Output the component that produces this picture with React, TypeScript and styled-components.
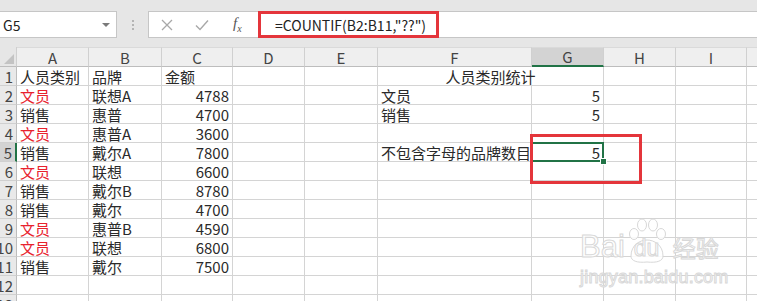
import React, { FunctionComponent } from 'react';
import styled, { createGlobalStyle } from 'styled-components';

const GlobalStyle = createGlobalStyle`
  html, body {
    margin: 0;
    padding: 0;
    background: #ffffff;
    overflow: hidden;
  }
  body {
    font-family: "Noto Sans CJK SC", "Noto Sans", sans-serif;
  }
`;

const GRID = '#d4d4d4';
const GREEN = '#217346';
const RED = '#e4353b';

const cols = ['A', 'B', 'C', 'D', 'E', 'F', 'G', 'H', 'I', ''];
const colWidths = [72, 73, 71, 72, 73, 154, 72, 72, 71, 80];

type Cell = { text: string; align?: 'left' | 'right' | 'center'; red?: boolean; span?: number };

const rows: Record<string, Cell>[] = [
  { A: { text: '人员类别' }, B: { text: '品牌' }, C: { text: '金额' }, F: { text: '人员类别统计', align: 'center', span: 2 } },
  { A: { text: '文员', red: true }, B: { text: '联想A' }, C: { text: '4788', align: 'right' }, F: { text: '文员' }, G: { text: '5', align: 'right' } },
  { A: { text: '销售' }, B: { text: '惠普' }, C: { text: '4700', align: 'right' }, F: { text: '销售' }, G: { text: '5', align: 'right' } },
  { A: { text: '文员', red: true }, B: { text: '惠普A' }, C: { text: '3600', align: 'right' } },
  { A: { text: '销售' }, B: { text: '戴尔A' }, C: { text: '7800', align: 'right' }, F: { text: '不包含字母的品牌数目' }, G: { text: '5', align: 'right' } },
  { A: { text: '文员', red: true }, B: { text: '联想' }, C: { text: '6600', align: 'right' } },
  { A: { text: '销售' }, B: { text: '戴尔B' }, C: { text: '8780', align: 'right' } },
  { A: { text: '销售' }, B: { text: '戴尔' }, C: { text: '4700', align: 'right' } },
  { A: { text: '文员', red: true }, B: { text: '惠普B' }, C: { text: '4590', align: 'right' } },
  { A: { text: '文员', red: true }, B: { text: '联想' }, C: { text: '6800', align: 'right' } },
  { A: { text: '销售' }, B: { text: '戴尔' }, C: { text: '7500', align: 'right' } },
  {},
  {},
];

const Page = styled.div`
  position: relative;
  width: 757px;
  height: 301px;
  overflow: hidden;
  background: #ffffff;
`;

const Toolbar = styled.div`
  display: flex;
  align-items: stretch;
  height: 27px;
  padding: 11px 0 9px;
  background: #e6e6e6;
  border-top: 1px solid #d6d6d6;
  box-sizing: content-box;
  margin-top: -1px;
`;

const NameBox = styled.div`
  display: flex;
  align-items: center;
  justify-content: space-between;
  width: 118px;
  margin-left: -1px;
  padding: 0 6px 0 3px;
  box-sizing: border-box;
  background: #ffffff;
  border: 1px solid #c6c6c6;
  font-size: 14px;
  color: #222;
`;

const DropArrow = styled.span`
  width: 0;
  height: 0;
  border-left: 4px solid transparent;
  border-right: 4px solid transparent;
  border-top: 4px solid #7a7a7a;
`;

const Grip = styled.div`
  width: 31px;
  display: flex;
  flex-direction: column;
  align-items: center;
  justify-content: center;
  gap: 2px;
  > span {
    width: 2px;
    height: 2px;
    background: #b4b4b4;
  }
`;

const FormulaArea = styled.div`
  flex: 1;
  display: flex;
  align-items: stretch;
  background: #ffffff;
  border: 1px solid #c6c6c6;
  border-right: none;
`;

const FxButtons = styled.div`
  display: flex;
  align-items: center;
  width: 109px;
  padding-left: 12px;
  box-sizing: border-box;
  gap: 22px;
`;

const FxGlyph = styled.span`
  font-family: "Liberation Serif", serif;
  font-style: italic;
  font-size: 15px;
  color: #555;
  margin-left: 2px;
`;

const FormulaText = styled.div`
  display: flex;
  align-items: center;
  width: 181px;
  margin: -1px 0;
  padding-left: 14px;
  box-sizing: border-box;
  border: 3px solid ${RED};
  font-size: 14px;
  color: #222;
  white-space: nowrap;
`;

const Sheet = styled.div`
  display: grid;
  grid-template-columns: 17px ${colWidths.map((w) => `${w}px`).join(' ')};
  grid-template-rows: 20px;
  grid-auto-rows: 19px;
`;

const Corner = styled.div`
  position: relative;
  background: #e6e6e6;
  border-right: 1px solid #cfcfcf;
  border-bottom: 1px solid #bdbdbd;
  &::after {
    content: '';
    position: absolute;
    right: 2px;
    bottom: 2px;
    border-left: 10px solid transparent;
    border-bottom: 10px solid #c3c3c3;
  }
`;

const ColHead = styled.div<{ $active?: boolean }>`
  display: flex;
  align-items: center;
  justify-content: center;
  background: ${({ $active }) => ($active ? '#d3d3d3' : '#efefef')};
  border-right: 1px solid #d0d0d0;
  border-bottom: ${({ $active }) => ($active ? `2px solid ${GREEN}` : '1px solid #bdbdbd')};
  border-top: 1px solid #dadada;
  box-sizing: border-box;
  font-size: 15px;
  color: #444;
`;

const RowHead = styled.div<{ $active?: boolean }>`
  display: flex;
  align-items: center;
  justify-content: flex-end;
  overflow: hidden;
  padding-right: 3px;
  background: ${({ $active }) => ($active ? '#d3d3d3' : '#e9e9e9')};
  border-right: ${({ $active }) => ($active ? `2px solid ${GREEN}` : '1px solid #bdbdbd')};
  border-bottom: 1px solid #d0d0d0;
  box-sizing: border-box;
  font-size: 15px;
  color: #444;
  white-space: nowrap;
`;

const DataCell = styled.div<{ $align: string; $red?: boolean; $span?: number; $selected?: boolean }>`
  position: relative;
  grid-column: span ${({ $span }) => $span || 1};
  display: flex;
  align-items: center;
  justify-content: ${({ $align }) =>
    $align === 'right' ? 'flex-end' : $align === 'center' ? 'center' : 'flex-start'};
  padding: 0 3px;
  border-right: 1px solid ${GRID};
  border-bottom: 1px solid ${GRID};
  box-sizing: border-box;
  font-size: 15px;
  line-height: 19px;
  color: ${({ $red }) => ($red ? '#e8222d' : '#2a2a2a')};
  white-space: nowrap;
  overflow: visible;
  ${({ $selected }) =>
    $selected &&
    `
    &::after {
      content: '';
      position: absolute;
      left: -1px;
      top: -1px;
      right: -1px;
      bottom: -1px;
      border: 2px solid ${GREEN};
      pointer-events: none;
    }
    &::before {
      content: '';
      position: absolute;
      right: -4px;
      bottom: -4px;
      width: 5px;
      height: 5px;
      background: ${GREEN};
      border: 1px solid #ffffff;
      z-index: 2;
    }
  `}
`;

const Annotation = styled.div`
  position: absolute;
  left: 530px;
  top: 134px;
  width: 112px;
  height: 50px;
  border: 3px solid ${RED};
  box-sizing: border-box;
  pointer-events: none;
`;

const Watermark = styled.div`
  position: absolute;
  left: 580px;
  top: 218px;
  display: flex;
  flex-direction: column;
  align-items: flex-start;
  color: rgba(255, 255, 255, 0.85);
  -webkit-text-stroke: 1px #d8d8d8;
  font-family: "Liberation Sans", sans-serif;
  pointer-events: none;
`;

const MarkLine = styled.div`
  display: flex;
  align-items: flex-end;
  height: 46px;
`;

const MarkWord = styled.span`
  font-size: 31px;
  line-height: 32px;
  margin-bottom: 1px;
`;

const PawBox = styled.div`
  position: relative;
  width: 40px;
  height: 46px;
  margin-left: 2px;
  > svg {
    position: absolute;
    left: 0;
    top: 0;
  }
  > span {
    position: absolute;
    left: 7px;
    bottom: 4px;
    font-size: 23px;
    line-height: 24px;
  }
`;

const MarkCn = styled.span`
  font-family: "Noto Sans CJK SC", sans-serif;
  font-size: 23px;
  line-height: 30px;
  margin-left: 6px;
  margin-bottom: 2px;
`;

const MarkUrl = styled.div`
  font-size: 18px;
  line-height: 18px;
  margin-top: 4px;
  letter-spacing: 0.2px;
`;

const Paw: FunctionComponent = () => (
  <svg width="40" height="46" viewBox="0 0 40 46">
    <g fill="rgba(255,255,255,0.85)" stroke="#d8d8d8" strokeWidth="1">
      <ellipse cx="7" cy="16" rx="4.5" ry="5.5" />
      <ellipse cx="15" cy="7" rx="4.5" ry="6" />
      <ellipse cx="26" cy="7" rx="4.5" ry="6" />
      <ellipse cx="34" cy="16" rx="4.5" ry="5.5" />
      <path d="M4 38 C4 27 13 22 20 22 C27 22 36 27 36 38 C36 43 30 45 20 44 C10 45 4 43 4 38 Z" />
    </g>
  </svg>
);

const CrossIcon: FunctionComponent = () => (
  <svg width="12" height="12" viewBox="0 0 12 12">
    <path d="M1 1 L11 11 M11 1 L1 11" stroke="#a8a8a8" strokeWidth="1.3" fill="none" />
  </svg>
);

const CheckIcon: FunctionComponent = () => (
  <svg width="14" height="12" viewBox="0 0 14 12">
    <path d="M1 6.5 L5 10.5 L13 1.5" stroke="#a8a8a8" strokeWidth="1.4" fill="none" />
  </svg>
);

const App: FunctionComponent = () => {
  return (
    <Page>
      <GlobalStyle />
      <Toolbar>
        <NameBox>
          <span>G5</span>
          <DropArrow />
        </NameBox>
        <Grip>
          <span />
          <span />
          <span />
        </Grip>
        <FormulaArea>
          <FxButtons>
            <CrossIcon />
            <CheckIcon />
            <FxGlyph>
              f<sub style={{ fontSize: 10 }}>x</sub>
            </FxGlyph>
          </FxButtons>
          <FormulaText>=COUNTIF(B2:B11,"??")</FormulaText>
        </FormulaArea>
      </Toolbar>
      <Sheet>
        <Corner />
        {cols.map((c, i) => (
          <ColHead key={i} $active={c === 'G'}>
            {c}
          </ColHead>
        ))}
        {rows.map((row, r) => {
          const cells: React.ReactNode[] = [];
          let skip = 0;
          cols.forEach((c, i) => {
            if (skip > 0) {
              skip -= 1;
              return;
            }
            const cell = c ? row[c] : undefined;
            if (cell && cell.span) skip = cell.span - 1;
            cells.push(
              <DataCell
                key={i}
                $align={cell?.align || 'left'}
                $red={cell?.red}
                $span={cell?.span}
                $selected={c === 'G' && r === 4}
              >
                {cell?.text}
              </DataCell>
            );
          });
          return (
            <React.Fragment key={r}>
              <RowHead $active={r === 4}>{r + 1}</RowHead>
              {cells}
            </React.Fragment>
          );
        })}
      </Sheet>
      <Annotation />
      <Watermark>
        <MarkLine>
          <MarkWord>Bai</MarkWord>
          <PawBox>
            <Paw />
            <span>du</span>
          </PawBox>
          <MarkCn>经验</MarkCn>
        </MarkLine>
        <MarkUrl>jingyan.baidu.com</MarkUrl>
      </Watermark>
    </Page>
  );
};

export default App;
